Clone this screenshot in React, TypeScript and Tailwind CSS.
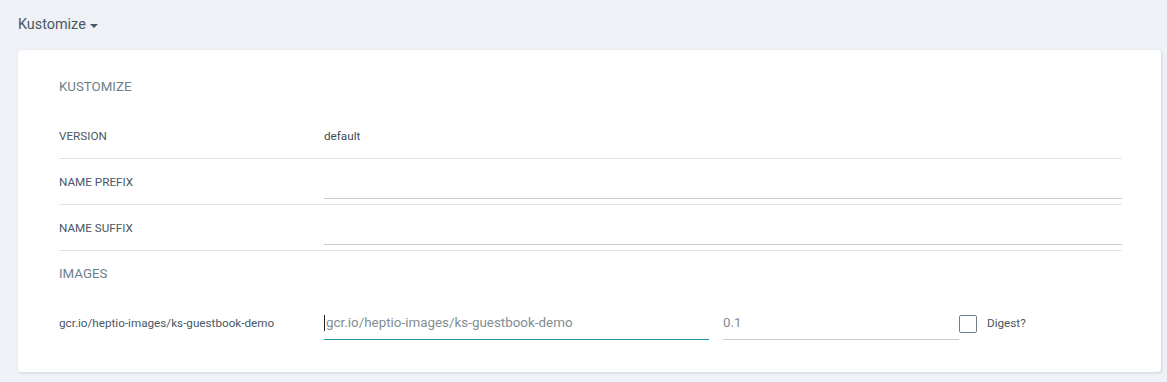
import { useState } from 'react'

const FONT = { fontFamily: 'Roboto, "Liberation Sans", sans-serif' }

function FieldRow({ label, children }: { label: string; children: React.ReactNode }) {
  return (
    <div className="flex items-center h-[46px] border-b border-[#dee6eb]">
      <div className="w-[265px] shrink-0 pt-[2px] text-[11.7px] text-[#495763] uppercase">{label}</div>
      <div className="flex-1 text-[11.7px] leading-[16px]">{children}</div>
    </div>
  )
}

export default function App() {
  const [digest, setDigest] = useState(false)

  return (
    <div style={FONT} className="w-[1167px] h-[382px] bg-[#eef1f5] overflow-hidden">
      <div className="h-[50px] pl-[18px] flex items-center">
        <span className="text-[14.4px] text-[#495763]">Kustomize</span>
        <svg width="10" height="10" viewBox="0 0 10 10" className="ml-[3px] mt-[1px]">
          <path d="M1 3 L9 3 L5 7 Z" fill="#495763" />
        </svg>
      </div>

      <div className="ml-[18px] w-[1143px] h-[322px] bg-white rounded-[4px] shadow-[1px_1px_3px_rgba(0,0,0,0.12)] pl-[41px] pr-[39px] pt-[27px]">
        <h3 className="h-[20px] leading-[20px] text-[13.3px] text-[#6d7f8b] uppercase mb-[16px]">Kustomize</h3>

        <FieldRow label="Version">
          <span className="text-[11.7px] text-[#3d4a55]">default</span>
        </FieldRow>
        <FieldRow label="Name prefix">
          <input className="block w-full h-[34px] border-b border-[#cccccc] outline-none text-[13.4px]" />
        </FieldRow>
        <FieldRow label="Name suffix">
          <input className="block w-full h-[34px] border-b border-[#cccccc] outline-none text-[13.4px]" />
        </FieldRow>

        <h3 className="mt-[13px] h-[20px] leading-[20px] text-[13.3px] text-[#6d7f8b] uppercase">Images</h3>

        <div className="flex items-center mt-[23px]">
          <div className="w-[265px] shrink-0 pt-[1px] text-[11.7px] text-[#495763]">gcr.io/heptio-images/ks-guestbook-demo</div>
          <div className="flex items-center">
            <div className="w-[385px] h-[33px] border-b border-[#1a97a8] flex items-center">
              <span className="w-px h-[16px] bg-[#222] mr-px" />
              <span className="text-[13.4px] text-[#818d94]">gcr.io/heptio-images/ks-guestbook-demo</span>
            </div>
            <div className="ml-[14px] w-[236px] h-[33px] border-b border-[#cccccc] flex items-center">
              <span className="text-[13.4px] text-[#818d94]">0.1</span>
            </div>
            <label className="flex items-center cursor-pointer">
              <button
                onClick={() => setDigest(!digest)}
                className="w-[18px] h-[18px] border border-[#6d7f8b] rounded-[2px] bg-white flex items-center justify-center"
              >
                {digest && (
                  <svg width="12" height="12" viewBox="0 0 12 12">
                    <path d="M2 6 L5 9 L10 3" stroke="#1a97a8" strokeWidth="2" fill="none" />
                  </svg>
                )}
              </button>
              <span className="ml-[10px] text-[11.7px] text-[#495763]">Digest?</span>
            </label>
          </div>
        </div>
      </div>
    </div>
  )
}
